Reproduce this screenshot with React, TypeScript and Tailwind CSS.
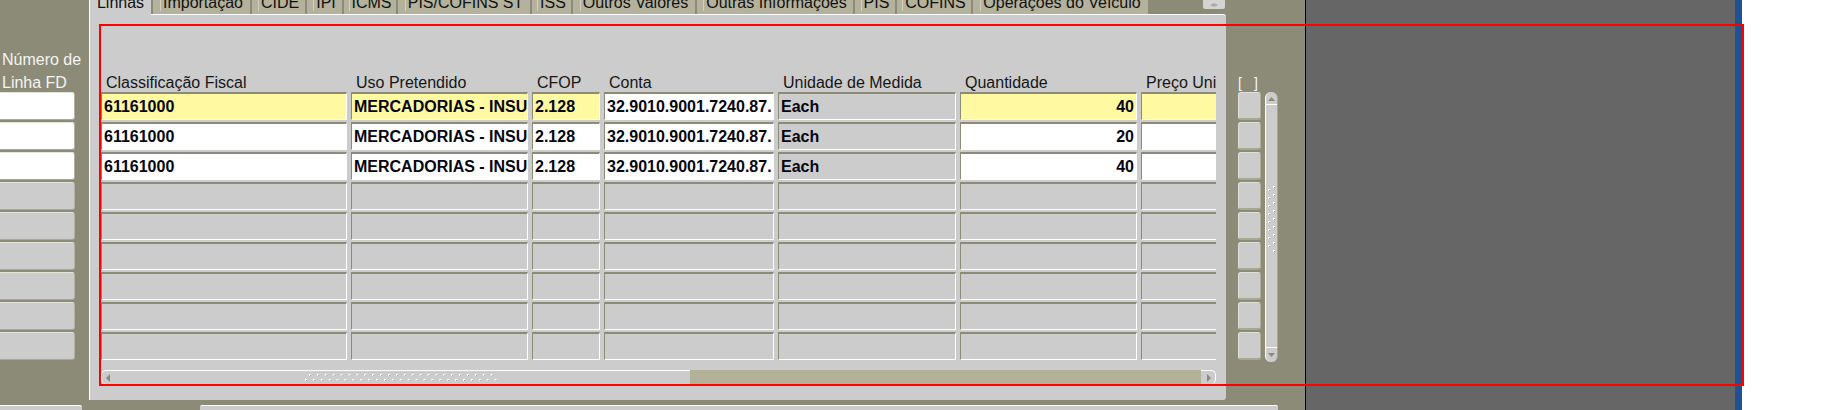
import clsx from 'clsx'

const tabs = [
  { label: 'Linhas', w: 'w-[62px]', active: true },
  { label: 'Importação', w: 'w-[99px]' },
  { label: 'CIDE', w: 'w-[55px]' },
  { label: 'IPI', w: 'w-[37px]' },
  { label: 'ICMS', w: 'w-[54px]' },
  { label: 'PIS/COFINS ST', w: 'w-[134px]' },
  { label: 'ISS', w: 'w-[41px]' },
  { label: 'Outros Valores', w: 'w-[124px]' },
  { label: 'Outras Informações', w: 'w-[158px]' },
  { label: 'PIS', w: 'w-[42px]' },
  { label: 'COFINS', w: 'w-[76px]' },
  { label: 'Operações do Veículo', w: 'w-[177px]' },
]

const cols = [
  { label: 'Classificação Fiscal', w: 'w-[246px]' },
  { label: 'Uso Pretendido', w: 'w-[177px]' },
  { label: 'CFOP', w: 'w-[68px]' },
  { label: 'Conta', w: 'w-[170px]' },
  { label: 'Unidade de Medida', w: 'w-[178px]' },
  { label: 'Quantidade', w: 'w-[177px]' },
  { label: 'Preço Unitário', w: 'w-[120px]' },
]

type Bg = 'y' | 'w' | 'g'

const bgClass: Record<Bg, string> = {
  y: 'bg-[#fff9a1]',
  w: 'bg-white',
  g: 'bg-[#cccccc]',
}

const line = ['61161000', 'MERCADORIAS - INSUMOS', '2.128', '32.9010.9001.7240.87.', 'Each']

const rows: { vals: string[]; bgs: Bg[] }[] = [
  { vals: [...line, '40', ''], bgs: ['y', 'y', 'y', 'w', 'g', 'y', 'y'] },
  { vals: [...line, '20', ''], bgs: ['w', 'w', 'w', 'w', 'g', 'w', 'w'] },
  { vals: [...line, '40', ''], bgs: ['w', 'w', 'w', 'w', 'g', 'w', 'w'] },
  ...Array.from({ length: 6 }, () => ({
    vals: ['', '', '', '', '', '', ''],
    bgs: ['g', 'g', 'g', 'g', 'g', 'g', 'g'] as Bg[],
  })),
]

// little grip texture used on the scrollbar thumbs
function HGrip() {
  const top = Array.from({ length: 24 }, (_, i) => 4 + i * 7.9)
  const bottom = Array.from({ length: 25 }, (_, i) => i * 7.9)
  return (
    <svg width="196" height="8" viewBox="0 0 196 8">
      {top.map((x) => (
        <g key={'t' + x}>
          <rect x={x} y={0} width={2} height={2} fill="#ffffff" />
          <rect x={x + 1} y={1} width={1} height={1} fill="#9a9986" />
        </g>
      ))}
      {bottom.map((x) => (
        <g key={'b' + x}>
          <rect x={x} y={5} width={2} height={2} fill="#ffffff" />
          <rect x={x + 1} y={6} width={1} height={1} fill="#9a9986" />
        </g>
      ))}
    </svg>
  )
}

function VGrip() {
  const a = Array.from({ length: 8 }, (_, i) => 3 + i * 8)
  const b = Array.from({ length: 9 }, (_, i) => i * 8)
  return (
    <svg width="9" height="66" viewBox="0 0 9 66">
      {a.map((y) => (
        <g key={'a' + y}>
          <rect x={1} y={y} width={2} height={2} fill="#ffffff" />
          <rect x={2} y={y + 1} width={1} height={1} fill="#9a9986" />
        </g>
      ))}
      {b.map((y) => (
        <g key={'b' + y}>
          <rect x={6} y={y} width={2} height={2} fill="#ffffff" />
          <rect x={7} y={y + 1} width={1} height={1} fill="#9a9986" />
        </g>
      ))}
    </svg>
  )
}

function Cell({ bg, value, w, right }: { bg: Bg; value: string; w: string; right?: boolean }) {
  return (
    <div
      className={clsx(
        'h-[28px] shrink-0 overflow-hidden whitespace-nowrap border-t-2 border-l border-b border-r border-t-[#8c8b78] border-l-[#8c8b78] border-b-white border-r-white px-[2px] text-[16px] font-bold leading-[25px] text-[#050510]',
        bgClass[bg],
        w,
        right && 'text-right',
      )}
    >
      {value}
    </div>
  )
}

function LeftBox({ white }: { white?: boolean }) {
  return (
    <div
      className={clsx(
        'h-[28px] w-[75px] rounded-r-[3px] border-t border-r border-b border-t-[#e4e4dc] border-r-[#b3b2a0] border-b-[#a9a895]',
        white ? 'bg-white' : 'bg-[#cccccc]',
      )}
    />
  )
}

export default function App() {
  return (
    <div className="relative flex h-[410px] w-[1844px] overflow-hidden bg-white font-['Liberation_Sans',Arial,sans-serif]">
      {/* form window */}
      <div className="flex h-full w-[1305px] shrink-0 flex-col bg-[#8c8b78]">
        <div className="flex h-[405px]">
          {/* left column */}
          <div className="flex w-[89px] shrink-0 flex-col pt-[48px]">
            <div className="h-[44px] whitespace-nowrap pl-[2px] text-[16px] leading-[23px] text-[#f4f4f4]">
              Número de
              <br />
              Linha FD
            </div>
            <div className="flex flex-col gap-[2px]">
              {rows.map((_, i) => (
                <LeftBox key={i} white={i < 3} />
              ))}
            </div>
          </div>

          {/* tab canvas */}
          <div className="flex w-[1137px] shrink-0 flex-col">
            <div className="flex h-[14px] items-start">
              {tabs.map((t) =>
                t.active ? (
                  <div
                    key={t.label}
                    className={clsx(
                      'relative z-10 flex h-[15px] shrink-0 items-end justify-center overflow-hidden border-l border-white bg-[#cccccc] pb-[4px] text-[16px] leading-none text-[#111]',
                      t.w,
                    )}
                  >
                    {t.label}
                  </div>
                ) : (
                  <div
                    key={t.label}
                    className={clsx(
                      'flex h-[14px] shrink-0 items-end justify-center overflow-hidden border-l-2 border-[#8c8b78] bg-[#b4b19c] pb-[3px] text-[16px] leading-none text-[#111]',
                      t.w,
                    )}
                  >
                    <span className="border-l border-[#d2d0be] pl-[2px]">{t.label}</span>
                  </div>
                ),
              )}
              <div className="flex-1" />
              <div className="mr-[1px] flex h-[9px] w-[22px] items-center justify-center rounded-b-[2px] bg-[#d4d4d0] text-[8px] leading-none text-[#aaa]">
                ◂▸
              </div>
            </div>

            <div className="flex h-[386px] flex-col rounded-r-[3px] border-t border-l border-white bg-[#cccccc] pl-[11px] pt-[59px]">
              <div className="flex w-[1115px] flex-col overflow-hidden">
                <div className="flex h-[18px] gap-[4px]">
                  {cols.map((c) => (
                    <div
                      key={c.label}
                      className={clsx(
                        'shrink-0 overflow-hidden whitespace-nowrap pl-[5px] text-[16px] leading-[18px] text-[#161616]',
                        c.w,
                      )}
                    >
                      {c.label}
                    </div>
                  ))}
                </div>
                <div className="flex flex-col gap-[2px]">
                  {rows.map((r, i) => (
                    <div key={i} className="flex gap-[4px]">
                      {cols.map((c, j) => (
                        <Cell key={c.label} bg={r.bgs[j]} value={r.vals[j]} w={c.w} right={j === 5} />
                      ))}
                    </div>
                  ))}
                </div>
              </div>

              {/* horizontal scrollbar */}
              <div className="mt-[10px] flex h-[14px] w-[1115px]">
                <div className="flex w-[14px] items-center justify-center rounded-l-[5px] border-t border-l border-white bg-[#cccccc]">
                  <svg width="5" height="8" viewBox="0 0 5 8">
                    <path d="M4 0 L0 4 L4 8 Z" fill="#8c8b78" />
                  </svg>
                </div>
                <div className="flex w-[575px] items-center justify-center border-t border-white bg-[#cccccc] pt-[1px]">
                  <HGrip />
                </div>
                <div className="flex-1 bg-[#b4b19b]" />
                <div className="flex w-[15px] items-center justify-center rounded-r-[5px] border-t border-r border-white bg-[#cccccc]">
                  <svg width="5" height="8" viewBox="0 0 5 8">
                    <path d="M1 0 L5 4 L1 8 Z" fill="#8c8b78" />
                  </svg>
                </div>
              </div>
            </div>
          </div>

          {/* record indicators + vertical scrollbar */}
          <div className="flex w-[79px] shrink-0 flex-col pl-[12px] pt-[74px]">
            <div className="flex h-[18px] w-[20px] justify-between text-[14px] leading-[18px] text-[#f2f6ff]">
              <span>[</span>
              <span>]</span>
            </div>
            <div className="flex gap-[4px]">
              <div className="flex flex-col gap-[2px]">
                {rows.map((_, i) => (
                  <div
                    key={i}
                    className="h-[28px] w-[23px] rounded-[3px] border-t border-l border-b-2 border-r border-t-[#e0e0d6] border-l-[#e0e0d6] border-b-[#a8a792] border-r-[#b0af9b] bg-[#cccccc]"
                  />
                ))}
              </div>
              <div className="flex h-[270px] w-[13px] flex-col rounded-[6px] border-l border-r border-l-white border-r-[#a8a792] bg-[#cccccc]">
                <div className="flex h-[13px] items-center justify-center border-b border-white pt-[1px]">
                  <svg width="7" height="4" viewBox="0 0 7 4">
                    <path d="M0 4 L3.5 0 L7 4 Z" fill="#8c8b78" />
                  </svg>
                </div>
                <div className="flex flex-1 items-center justify-center pb-[14px]">
                  <VGrip />
                </div>
                <div className="flex h-[15px] items-center justify-center border-t border-white">
                  <svg width="7" height="4" viewBox="0 0 7 4">
                    <path d="M0 0 L3.5 4 L7 0 Z" fill="#8c8b78" />
                  </svg>
                </div>
              </div>
            </div>
          </div>
        </div>

        {/* next block peeking at the bottom */}
        <div className="flex h-[5px]">
          <div className="w-[82px] rounded-tr-[2px] border-t border-white bg-[#cccccc]" />
          <div className="w-[118px]" />
          <div className="w-[1078px] rounded-t-[2px] border-t border-white bg-[#cccccc]" />
        </div>
      </div>

      <div className="w-px shrink-0 bg-black" />
      <div className="w-[429px] shrink-0 bg-[#666666]" />
      <div className="w-[7px] shrink-0 bg-[#1f5193]" />
      <div className="flex-1 bg-white" />

      {/* red annotation frame */}
      <div className="pointer-events-none absolute left-[99px] top-[24px] h-[362px] w-[1645px] border-2 border-[#ff0000]" />
    </div>
  )
}
